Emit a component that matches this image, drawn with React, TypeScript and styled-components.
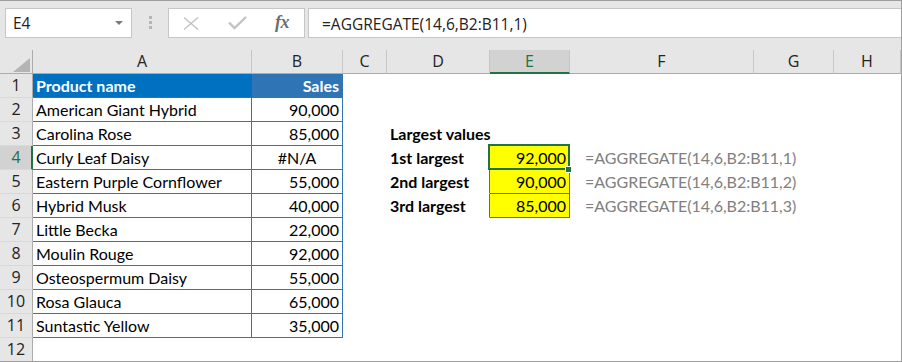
import React from 'react';
import styled, { createGlobalStyle } from 'styled-components';

const GlobalStyle = createGlobalStyle`
  html, body { margin: 0; padding: 0; background: #ffffff; }
  body { font-family: 'Lato', 'Liberation Sans', sans-serif; }
`;

const UI_FONT = `'Open Sans', 'Noto Sans', sans-serif`;
const CELL_FONT = `'Lato', 'Liberation Sans', sans-serif`;
const GREEN = '#217346';
const TABLE_BLUE = '#2f75b5';
const HEADER_BLUE = '#0070c0';
const YELLOW = '#ffff00';

/* ---------- window & formula toolbar ---------- */

const Window = styled.div`
  width: 902px;
  height: 362px;
  box-sizing: border-box;
  border-top: 1px solid #9e9e9e;
  border-right: 1px solid #9e9e9e;
  border-bottom: 1px solid #9e9e9e;
  overflow: hidden;
  display: flex;
  flex-direction: column;
  background: #ffffff;
`;

const Toolbar = styled.div`
  flex: none;
  height: 49px;
  box-sizing: border-box;
  padding: 7px 0 0 5px;
  background: #e6e6e6;
  display: flex;
  align-items: flex-start;
`;

const Field = styled.div<{ $width?: number }>`
  box-sizing: border-box;
  height: 30px;
  ${p => (p.$width ? `width: ${p.$width}px; flex: none;` : 'flex: 1;')}
  background: #ffffff;
  border: 1px solid #c6c6c6;
  display: flex;
  align-items: center;
  font: 400 15.5px/28px ${UI_FONT};
  color: #222222;
`;

const NameBox = styled(Field)`
  padding: 0 7px 0 7px;
  justify-content: space-between;
`;

const NameText = styled.span`
  margin-top: -1px;
`;

const DropCaret = styled.span`
  width: 0;
  height: 0;
  border-left: 4px solid transparent;
  border-right: 4px solid transparent;
  border-top: 4px solid #7a7a7a;
  margin-right: 1px;
`;

const Grip = styled.div`
  flex: none;
  margin: 8px 16px 0 17px;
  display: flex;
  flex-direction: column;
  gap: 2px;
`;

const GripDot = styled.span`
  width: 3px;
  height: 3px;
  background: #b5b5b5;
`;

const ButtonBox = styled(Field)`
  margin-right: 3px;
  padding-left: 14px;
  gap: 0;
`;

const IconSlot = styled.span<{ $w: number }>`
  width: ${p => p.$w}px;
  flex: none;
  display: flex;
  align-items: center;
`;

const FxLabel = styled.span`
  font: italic 700 18px/1 'Liberation Serif', 'DejaVu Serif', serif;
  color: #6e6e6e;
  letter-spacing: -0.5px;
  margin-top: -2px;
`;

const FormulaBox = styled(Field)`
  padding-left: 13px;
  border-right: none;
`;

const FormulaText = styled.span`
  margin-top: 2px;
`;

/* ---------- sheet grid ---------- */

const Sheet = styled.div`
  position: relative;
  display: grid;
  grid-template-columns: 33px 219px 91px 44px 103px 80px 184px 80px 67px;
  grid-auto-rows: 24px;
`;

const Corner = styled.div`
  position: relative;
  box-sizing: border-box;
  background: #e6e6e6;
  border-right: 1px solid #ababab;
  border-bottom: 1px solid #ababab;
  &::after {
    content: '';
    position: absolute;
    left: 13px;
    top: 8px;
    width: 17px;
    height: 14px;
    background: #b4b4b4;
    clip-path: polygon(100% 0, 100% 100%, 0 100%);
  }
`;

const ColHeader = styled.div<{ $active?: boolean }>`
  box-sizing: border-box;
  background: ${p => (p.$active ? '#d2d2d2' : '#e6e6e6')};
  border-right: 1px solid #c6c6c6;
  border-bottom: ${p => (p.$active ? `2px solid ${GREEN}` : '1px solid #ababab')};
  display: flex;
  justify-content: center;
  font: 400 16px/23px ${UI_FONT};
  color: ${p => (p.$active ? GREEN : '#222222')};
`;

const RowHeader = styled.div<{ $active?: boolean }>`
  box-sizing: border-box;
  background: ${p => (p.$active ? '#d2d2d2' : '#e6e6e6')};
  border-right: ${p => (p.$active ? `2px solid ${GREEN}` : '1px solid #ababab')};
  border-bottom: 1px solid #d9d9d9;
  display: flex;
  justify-content: center;
  padding-left: ${p => (p.$active ? 1 : 0)}px;
  font: 400 16px/23px ${UI_FONT};
  color: ${p => (p.$active ? GREEN : '#222222')};
`;

type Align = 'left' | 'right' | 'center';

const Cell = styled.div<{
  $fill?: string;
  $align?: Align;
  $bold?: boolean;
  $ink?: string;
  $lineRight?: string;
  $lineBottom?: string;
  $indent?: number;
}>`
  box-sizing: border-box;
  min-width: 0;
  display: flex;
  align-items: flex-end;
  justify-content: ${p =>
    p.$align === 'right' ? 'flex-end' : p.$align === 'center' ? 'center' : 'flex-start'};
  padding: 0 3px 2px ${p => p.$indent ?? 3}px;
  background: ${p => p.$fill ?? 'transparent'};
  border-right: 1px solid ${p => p.$lineRight ?? 'transparent'};
  border-bottom: 1px solid ${p => p.$lineBottom ?? 'transparent'};
  font: ${p => (p.$bold ? 700 : 400)} 16px/19px ${CELL_FONT};
  color: ${p => p.$ink ?? '#000000'};
  white-space: nowrap;
  overflow: visible;
`;

const Selection = styled.div`
  position: absolute;
  left: 488px;
  top: 94px;
  width: 82px;
  height: 26px;
  box-sizing: border-box;
  border: 2px solid ${GREEN};
  pointer-events: none;
`;

const FillHandle = styled.div`
  position: absolute;
  left: 565px;
  top: 116px;
  width: 7px;
  height: 7px;
  box-sizing: border-box;
  background: ${GREEN};
  border: 1px solid #ffffff;
`;

/* ---------- data ---------- */

const COLUMNS = ['A', 'B', 'C', 'D', 'E', 'F', 'G', 'H'];

const products: [string, string][] = [
  ['American Giant Hybrid', '90,000'],
  ['Carolina Rose', '85,000'],
  ['Curly Leaf Daisy', '#N/A'],
  ['Eastern Purple Cornflower', '55,000'],
  ['Hybrid Musk', '40,000'],
  ['Little Becka', '22,000'],
  ['Moulin Rouge', '92,000'],
  ['Osteospermum Daisy', '55,000'],
  ['Rosa Glauca', '65,000'],
  ['Suntastic Yellow', '35,000'],
];

const ranks: { label: string; value: string; formula: string }[] = [
  { label: '1st largest', value: '92,000', formula: '=AGGREGATE(14,6,B2:B11,1)' },
  { label: '2nd largest', value: '90,000', formula: '=AGGREGATE(14,6,B2:B11,2)' },
  { label: '3rd largest', value: '85,000', formula: '=AGGREGATE(14,6,B2:B11,3)' },
];

type CellSpec = {
  text?: string;
  fill?: string;
  align?: Align;
  bold?: boolean;
  ink?: string;
  lineRight?: string;
  lineBottom?: string;
  indent?: number;
};

function rowCells(row: number): CellSpec[] {
  const cells: CellSpec[] = COLUMNS.map(() => ({}));

  // Product table, A1:B11
  if (row === 1) {
    cells[0] = { text: 'Product name', fill: HEADER_BLUE, bold: true, ink: '#ffffff', lineBottom: TABLE_BLUE };
    cells[1] = {
      text: 'Sales',
      fill: TABLE_BLUE,
      bold: true,
      ink: '#ffffff',
      align: 'right',
      lineRight: TABLE_BLUE,
      lineBottom: TABLE_BLUE,
    };
  } else if (row <= 11) {
    const [name, sales] = products[row - 2];
    cells[0] = { text: name, lineRight: TABLE_BLUE, lineBottom: TABLE_BLUE };
    cells[1] = {
      text: sales,
      align: sales.startsWith('#') ? 'center' : 'right',
      lineRight: TABLE_BLUE,
      lineBottom: TABLE_BLUE,
    };
  }

  // Largest values block, D3:F6
  if (row === 3) {
    cells[3] = { text: 'Largest values', bold: true };
    cells[4] = { lineBottom: TABLE_BLUE };
  }
  if (row >= 4 && row <= 6) {
    const r = ranks[row - 4];
    cells[3] = { text: r.label, bold: true, lineRight: TABLE_BLUE };
    cells[4] = { text: r.value, fill: YELLOW, align: 'right', lineRight: TABLE_BLUE, lineBottom: TABLE_BLUE };
    cells[5] = { text: r.formula, ink: '#808080', indent: 15 };
  }
  return cells;
}

/* ---------- icons ---------- */

const CancelIcon = () => (
  <svg width="16" height="13" viewBox="0 0 16 13">
    <path d="M1 0.5 L15 12.5 M15 0.5 L1 12.5" stroke="#c2c2c2" strokeWidth="1.4" fill="none" />
  </svg>
);

const EnterIcon = () => (
  <svg width="19" height="14" viewBox="0 0 19 14">
    <path d="M1 6.5 L6.5 12 L18 1" stroke="#c2c2c2" strokeWidth="2.4" fill="none" />
  </svg>
);

/* ---------- app ---------- */

export default function App() {
  const rows = Array.from({ length: 12 }, (_, i) => i + 1);
  return (
    <>
      <GlobalStyle />
      <Window>
        <Toolbar>
          <NameBox $width={127}>
            <NameText>E4</NameText>
            <DropCaret />
          </NameBox>
          <Grip>
            <GripDot />
            <GripDot />
            <GripDot />
          </Grip>
          <ButtonBox $width={137}>
            <IconSlot $w={45}>
              <CancelIcon />
            </IconSlot>
            <IconSlot $w={47}>
              <EnterIcon />
            </IconSlot>
            <IconSlot $w={20}>
              <FxLabel>fx</FxLabel>
            </IconSlot>
          </ButtonBox>
          <FormulaBox>
            <FormulaText>=AGGREGATE(14,6,B2:B11,1)</FormulaText>
          </FormulaBox>
        </Toolbar>

        <Sheet>
          <Corner />
          {COLUMNS.map(c => (
            <ColHeader key={c} $active={c === 'E'}>
              {c}
            </ColHeader>
          ))}

          {rows.map(r => (
            <React.Fragment key={r}>
              <RowHeader $active={r === 4}>{r}</RowHeader>
              {rowCells(r).map((c, i) => (
                <Cell
                  key={i}
                  $fill={c.fill}
                  $align={c.align}
                  $bold={c.bold}
                  $ink={c.ink}
                  $lineRight={c.lineRight}
                  $lineBottom={c.lineBottom}
                  $indent={c.indent}
                >
                  {c.text}
                </Cell>
              ))}
            </React.Fragment>
          ))}

          <Selection />
          <FillHandle />
        </Sheet>
      </Window>
    </>
  );
}
